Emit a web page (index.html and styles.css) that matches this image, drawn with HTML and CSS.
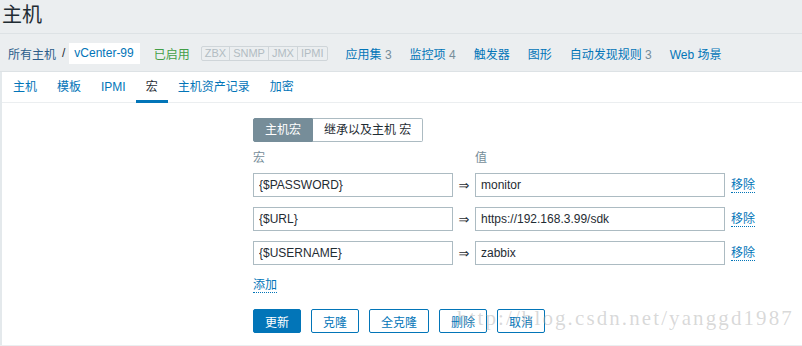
FILE: index.html
```html
<!DOCTYPE html>
<html lang="zh-CN">
<head>
    <meta charset="UTF-8">
    <title>主机</title>
    <link rel="stylesheet" href="styles.css">
</head>
<body>
    <div class="header">
        <h1>主机</h1>
    </div>

    <div class="host-nav">
        <a class="crumb">所有主机</a>
        <span class="sep">/</span>
        <a class="current">vCenter-99</a>
        <span class="status">已启用</span>
        <div class="tags">
            <span>ZBX</span><span>SNMP</span><span>JMX</span><span>IPMI</span>
        </div>
        <a class="nav-link">应用集 <em>3</em></a>
        <a class="nav-link">监控项 <em>4</em></a>
        <a class="nav-link">触发器</a>
        <a class="nav-link">图形</a>
        <a class="nav-link">自动发现规则 <em>3</em></a>
        <a class="nav-link">Web 场景</a>
    </div>

    <div class="content">
        <ul class="tabs">
            <li>主机</li>
            <li>模板</li>
            <li>IPMI</li>
            <li class="active">宏</li>
            <li>主机资产记录</li>
            <li>加密</li>
        </ul>

        <div class="form">
            <div class="segment">
                <span class="on">主机宏</span>
                <span>继承以及主机 宏</span>
            </div>

            <div class="macro-table">
                <div class="macro-head">
                    <span class="col-macro">宏</span>
                    <span class="col-arrow"></span>
                    <span class="col-value">值</span>
                </div>
                <div class="macro-row">
                    <input class="col-macro" type="text" value="{$PASSWORD}">
                    <span class="col-arrow">&rArr;</span>
                    <input class="col-value" type="text" value="monitor">
                    <a class="link">移除</a>
                </div>
                <div class="macro-row">
                    <input class="col-macro" type="text" value="{$URL}">
                    <span class="col-arrow">&rArr;</span>
                    <input class="col-value" type="text" value="https://192.168.3.99/sdk">
                    <a class="link">移除</a>
                </div>
                <div class="macro-row">
                    <input class="col-macro" type="text" value="{$USERNAME}">
                    <span class="col-arrow">&rArr;</span>
                    <input class="col-value" type="text" value="zabbix">
                    <a class="link">移除</a>
                </div>
            </div>

            <div class="add-row">
                <a class="link">添加</a>
            </div>

            <div class="buttons">
                <button class="primary">更新</button>
                <button>克隆</button>
                <button>全克隆</button>
                <button>删除</button>
                <button>取消</button>
            </div>
        </div>

        <div class="watermark">http://blog.csdn.net/yanggd1987</div>
    </div>
</body>
</html>
```

FILE: styles.css
```css
:root {
    --blue: #0275b8;
    --text: #1f2c33;
    --muted: #768d99;
    --border: #acbbc2;
    --bg: #ebeef0;
}

body {
    margin: 0;
    background-color: var(--bg);
    color: var(--text);
    font-family: 'Liberation Sans', 'Noto Sans CJK SC', sans-serif;
    font-size: 12px;
    height: 346px;
    overflow: hidden;
}

a {
    color: var(--blue);
    text-decoration: none;
}

/* 标题 */
.header {
    height: 33px;
    border-bottom: 1px solid #dde2e5;
    padding-left: 2px;
}

.header h1 {
    margin: 0;
    font-size: 20px;
    font-weight: normal;
    line-height: 30px;
}

/* 主机导航 */
.host-nav {
    height: 38px;
    border-bottom: 1px solid #dde2e5;
    display: flex;
    align-items: center;
    padding-left: 8px;
    padding-top: 1px;
    box-sizing: border-box;
}

.host-nav .crumb {
    color: #2c5d8a;
}

.host-nav .sep {
    margin: 0 4px 0 6px;
    color: var(--text);
}

.host-nav .current {
    background-color: #fff;
    height: 21px;
    line-height: 21px;
    padding: 0 6px 0 5px;
    color: var(--blue);
}

.host-nav .status {
    color: #429e47;
    margin-left: 14px;
}

.tags {
    display: flex;
    margin-left: 12px;
    margin-right: 18px;
}

.tags span {
    border: 1px solid #cfd5d9;
    color: #b2bcc2;
    font-size: 11px;
    line-height: 13px;
    padding: 0 3px;
    margin-left: -1px;
}

.tags span:first-child {
    border-radius: 2px 0 0 2px;
}

.tags span:last-child {
    border-radius: 0 2px 2px 0;
}

.nav-link {
    margin-right: 18px;
}

.nav-link em {
    font-style: normal;
    color: var(--muted);
}

/* 内容区 */
.content {
    background-color: #fff;
    border-left: 2px solid #e4e9ec;
    height: 273px;
    position: relative;
}

.tabs {
    list-style: none;
    margin: 0;
    padding: 0 0 0 1px;
    display: flex;
    height: 30px;
    border-bottom: 1px solid var(--bg);
}

.tabs li {
    padding: 0 10px;
    line-height: 30px;
    color: var(--blue);
}

.tabs li.active {
    color: var(--text);
    box-shadow: inset 0 -3px 0 var(--blue);
    height: 31px;
}

.form {
    padding: 15px 0 0 251px;
}

.segment {
    display: flex;
    height: 24px;
}

.segment span {
    border: 1px solid var(--border);
    padding: 0 11px;
    line-height: 22px;
}

.segment span:first-child {
    border-radius: 2px 0 0 2px;
}

.segment span:last-child {
    border-left: none;
    border-radius: 0 2px 2px 0;
}

.segment .on {
    background-color: var(--muted);
    border-color: var(--muted);
    color: #fff;
}

.macro-table {
    margin-top: 5px;
    display: flex;
    flex-direction: column;
    gap: 10px;
}

.macro-head {
    display: flex;
    height: 22px;
    line-height: 22px;
    color: var(--muted);
    margin-bottom: -6px;
}

.macro-row {
    display: flex;
    align-items: center;
    height: 24px;
}

.col-macro {
    width: 200px;
}

.col-arrow {
    width: 22px;
    text-align: center;
    font-family: 'DejaVu Sans', sans-serif;
    font-size: 13px;
}

.col-value {
    width: 250px;
}

input {
    height: 24px;
    box-sizing: border-box;
    border: 1px solid var(--border);
    padding: 0 5px;
    font-family: inherit;
    font-size: 12px;
    color: var(--text);
    margin: 0;
}

.link {
    border-bottom: 1px dotted var(--blue);
    line-height: 14px;
}

.macro-row .link {
    margin-left: 6px;
}

.add-row {
    margin-top: 13px;
    height: 15px;
}

.buttons {
    margin-top: 16px;
    display: flex;
    gap: 10px;
}

button {
    height: 24px;
    padding: 0 11px;
    border: 1px solid var(--blue);
    border-radius: 2px;
    background-color: #fff;
    color: var(--blue);
    font-family: inherit;
    font-size: 12px;
}

button.primary {
    background-color: var(--blue);
    color: #fff;
}

/* 水印 */
.watermark {
    position: absolute;
    left: 455px;
    top: 234px;
    font-family: 'Liberation Serif', serif;
    font-size: 21px;
    letter-spacing: 2.1px;
    color: rgba(170, 170, 170, 0.45);
    pointer-events: none;
}
```
